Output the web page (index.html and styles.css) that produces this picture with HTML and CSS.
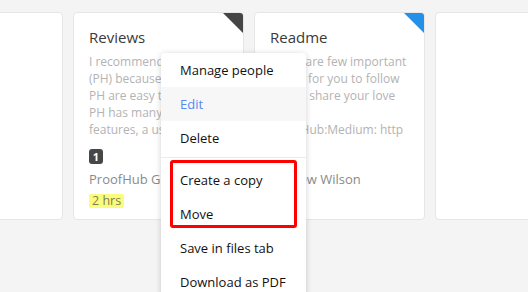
FILE: index.html
```html
<!DOCTYPE html>
<html>
<head>
<meta charset="utf-8">
<link rel="stylesheet" href="styles.css">
</head>
<body>
<div class="page">
  <div class="cards">
    <div class="card"></div>
    <div class="card corner-dark">
      <div class="card-title">Reviews</div>
      <div class="card-desc">
        <div class="line">I recommend ProofHub</div>
        <div class="line">(PH) because all tools in</div>
        <div class="line">PH are easy to use. Also,</div>
        <div class="line">PH has many advanced</div>
        <div class="line">features, a user friendly</div>
      </div>
      <div class="card-meta">
        <span class="badge">1</span>
      </div>
      <div class="author">ProofHub Guide</div>
      <span class="hrs">2 hrs</span>
    </div>
    <div class="card corner-blue">
      <div class="card-title">Readme</div>
      <div class="card-desc">
        <div class="line">There are few important</div>
        <div class="line">points for you to follow</div>
        <div class="line">Please share your love</div>
        <div class="line">&nbsp;</div>
        <div class="line">ProofHub:Medium: http</div>
      </div>
      <div class="card-meta">
        <span class="badge">2</span>
      </div>
      <div class="author">Andrew Wilson</div>
    </div>
    <div class="card"></div>
  </div>

  <div class="menu">
    <div class="menu-item">Manage people</div>
    <div class="menu-item active">Edit</div>
    <div class="menu-item">Delete</div>
    <div class="menu-sep"></div>
    <div class="menu-item">Create a copy</div>
    <div class="menu-item">Move</div>
    <div class="menu-item">Save in files tab</div>
    <div class="menu-item">Download as PDF</div>
    <div class="highlight-box"></div>
  </div>
</div>
</body>
</html>
```

FILE: styles.css
```css
html, body {
  margin: 0;
  padding: 0;
  background: #f4f4f4;
  font-family: "Open Sans", "Noto Sans", sans-serif;
  overflow: hidden;
}

.page {
  position: relative;
  width: 528px;
  height: 292px;
  overflow: hidden;
}

.cards {
  display: flex;
  gap: 10px;
  padding-top: 12px;
  margin-left: -108px;
}

.card {
  position: relative;
  flex: 0 0 171px;
  box-sizing: border-box;
  height: 208px;
  background: #fff;
  border: 1px solid #e6e6e6;
  border-radius: 4px;
  padding: 13px 15px 0;
  overflow: hidden;
}

.corner-dark::after,
.corner-blue::after {
  content: "";
  position: absolute;
  top: 0;
  right: 0;
  width: 20px;
  height: 20px;
  clip-path: polygon(0 0, 100% 0, 100% 100%);
}
.corner-dark::after { background: #454545; }
.corner-blue::after { background: #2490e8; }

.card-title {
  font-size: 15px;
  line-height: 22px;
  color: #3a3a3a;
}

.card-desc {
  margin-top: 5px;
  font-size: 12px;
  line-height: 17px;
  color: #b3b3b3;
}

.line {
  white-space: nowrap;
}

.card-meta {
  margin-top: 11px;
  height: 15px;
  display: flex;
}

.badge {
  display: inline-flex;
  align-items: center;
  justify-content: center;
  width: 14px;
  height: 15px;
  border-radius: 3px;
  background: #474747;
  color: #fff;
  font-size: 11px;
  font-weight: 700;
  line-height: 1;
}

.author {
  margin-top: 6px;
  font-size: 13px;
  line-height: 18px;
  color: #8a8a8a;
  white-space: nowrap;
}

.hrs {
  display: inline-block;
  margin-top: 1px;
  padding: 0 3px;
  height: 14px;
  line-height: 14px;
  font-size: 12.5px;
  background: #fbfb7c;
  color: #7d7d55;
  border-radius: 2px;
}

.menu {
  position: absolute;
  left: 161px;
  top: 53px;
  width: 145px;
  background: #fff;
  border-radius: 4px;
  box-shadow: 0 1px 6px rgba(0, 0, 0, 0.18);
  padding-bottom: 12px;
}

.menu-item {
  height: 34px;
  line-height: 34px;
  padding: 0 19px;
  font-size: 13px;
  color: #111;
  white-space: nowrap;
}

.menu-item.active {
  background: #f7f7f7;
  color: #5a87ee;
}

.menu-sep {
  height: 1px;
  background: #ececec;
  margin: 2px 0 5px;
}

.highlight-box {
  position: absolute;
  left: 9px;
  top: 107px;
  width: 127px;
  height: 68px;
  box-sizing: border-box;
  border: 3px solid #ff0000;
  border-radius: 3px;
}
```
